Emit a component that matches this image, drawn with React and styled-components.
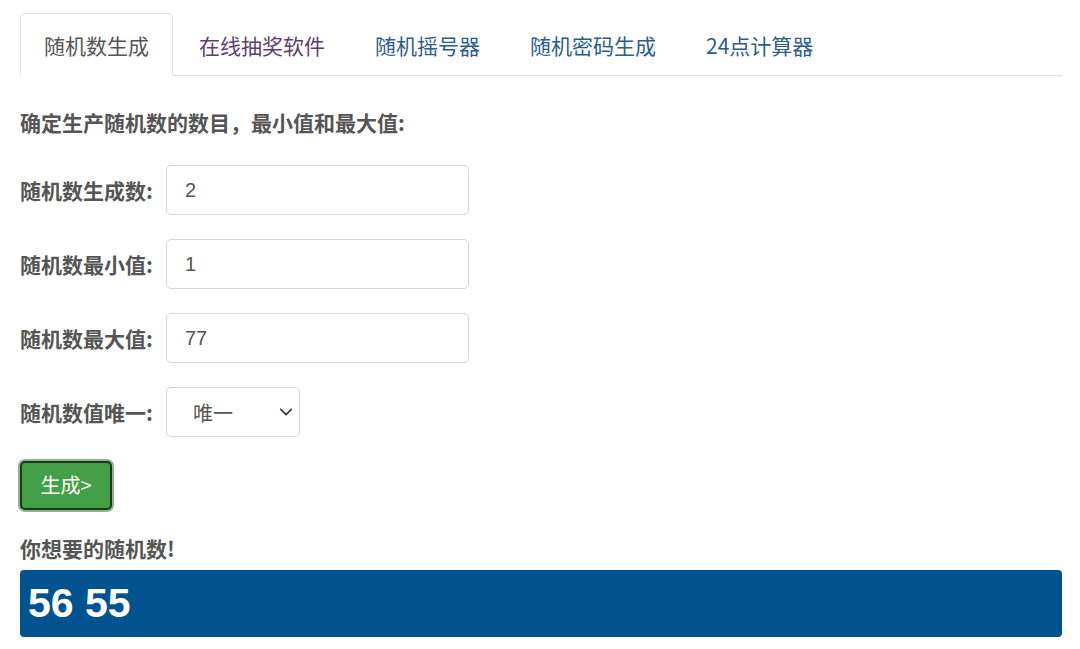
import React from 'react';
import styled, { createGlobalStyle } from 'styled-components';

const GlobalStyle = createGlobalStyle`
    body {
        margin: 0;
        background: #fff;
        font-family: "Noto Sans CJK SC", "Liberation Sans", sans-serif;
        color: #555;
    }
`;

const Page = styled.div`
    padding: 13px 18px 0 20px;
`;

const TabBar = styled.ul`
    display: flex;
    list-style: none;
    margin: 0;
    padding: 0;
    border-bottom: 1px solid #e2e2e2;
`;

const Tab = styled.li`
    margin: 0 2px -1px 0;
    padding: 0 23px;
    height: 61px;
    display: flex;
    align-items: center;
    font-size: 21px;
    border: 1px solid ${p => (p.$active ? '#e2e2e2' : 'transparent')};
    border-bottom-color: ${p => (p.$active ? '#fff' : 'transparent')};
    border-radius: 5px 5px 0 0;
    background: ${p => (p.$active ? '#fff' : 'transparent')};
    color: ${p => p.$color || '#2d5c8f'};
    cursor: pointer;
`;

const Intro = styled.h4`
    margin: 32px 0 29px;
    font-size: 21px;
    line-height: 28px;
    font-weight: bold;
    color: #555;
`;

const Form = styled.div`
    display: flex;
    flex-direction: column;
    gap: 24px;
`;

const Row = styled.div`
    display: flex;
    align-items: center;
`;

const Label = styled.label`
    width: 146px;
    font-size: 21px;
    font-weight: bold;
    color: #555;
`;

const Input = styled.input`
    box-sizing: border-box;
    width: 303px;
    height: 50px;
    padding: 0 18px;
    border: 1px solid #d6d6d6;
    border-radius: 5px;
    font-size: 20px;
    font-family: "Liberation Sans", sans-serif;
    color: #555;
    outline: none;
`;

const SelectWrap = styled.div`
    position: relative;
    width: 134px;
    height: 50px;
`;

const Select = styled.select`
    appearance: none;
    box-sizing: border-box;
    width: 100%;
    height: 100%;
    padding: 0 26px;
    border: 1px solid #d6d6d6;
    border-radius: 5px;
    background: #fff;
    font-size: 20px;
    font-family: "Noto Sans CJK SC", sans-serif;
    color: #555;
    outline: none;
`;

const Chevron = styled.svg`
    position: absolute;
    right: 7px;
    top: 18px;
    pointer-events: none;
`;

const Button = styled.button`
    box-sizing: border-box;
    align-self: flex-start;
    width: 92px;
    height: 49px;
    padding: 0 0 2px;
    background: #44a047;
    color: #fff;
    border: 2px solid #1c381c;
    border-radius: 5px;
    box-shadow: 0 0 0 2px #8fb38f;
    font-size: 20px;
    font-family: "Noto Sans CJK SC", sans-serif;
    cursor: pointer;
`;

const ResultTitle = styled.h4`
    margin: 24px 0 8px;
    font-size: 21px;
    line-height: 28px;
    font-weight: bold;
    color: #555;
`;

const ResultBox = styled.div`
    height: 67px;
    display: flex;
    align-items: center;
    padding: 0 8px;
    background: #01538f;
    border-radius: 4px;
    color: #fff;
    font-size: 41px;
    font-weight: bold;
    font-family: "Liberation Sans", sans-serif;
`;

const tabs = [
    { name: '随机数生成', active: true, color: '#555' },
    { name: '在线抽奖软件', color: '#5c3f6f' },
    { name: '随机摇号器' },
    { name: '随机密码生成' },
    { name: '24点计算器' },
];

export default function App() {
    return (
        <Page>
            <GlobalStyle />
            <TabBar>
                {tabs.map(t => (
                    <Tab key={t.name} $active={t.active} $color={t.color}>{t.name}</Tab>
                ))}
            </TabBar>
            <Intro>确定生产随机数的数目，最小值和最大值:</Intro>
            <Form>
                <Row>
                    <Label>随机数生成数:</Label>
                    <Input defaultValue="2" />
                </Row>
                <Row>
                    <Label>随机数最小值:</Label>
                    <Input defaultValue="1" />
                </Row>
                <Row>
                    <Label>随机数最大值:</Label>
                    <Input defaultValue="77" />
                </Row>
                <Row>
                    <Label>随机数值唯一:</Label>
                    <SelectWrap>
                        <Select defaultValue="1">
                            <option value="1">唯一</option>
                            <option value="0">不唯一</option>
                        </Select>
                        <Chevron width="14" height="14" viewBox="0 0 16 16">
                            <path d="M2 5l6 6 6-6" fill="none" stroke="#343a40" strokeWidth="2" strokeLinecap="round" strokeLinejoin="round" />
                        </Chevron>
                    </SelectWrap>
                </Row>
                <Button>生成&gt;</Button>
            </Form>
            <ResultTitle>你想要的随机数!</ResultTitle>
            <ResultBox>56 55</ResultBox>
        </Page>
    );
}
